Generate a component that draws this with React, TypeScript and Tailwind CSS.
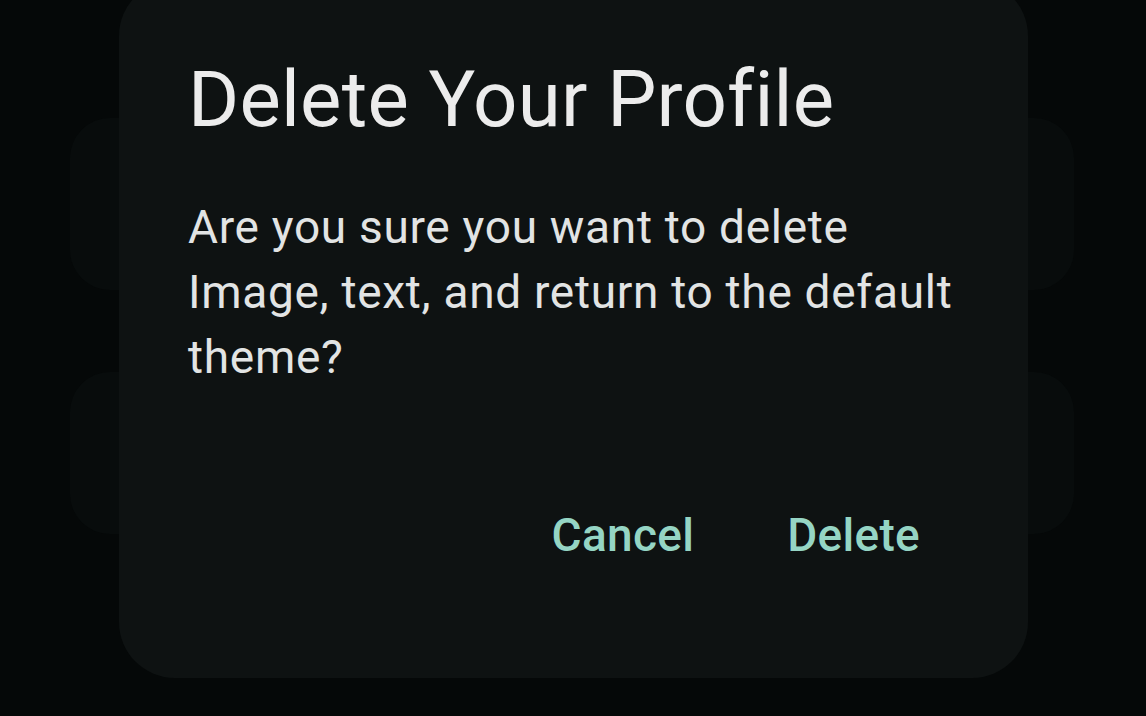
export default function App() {
  return (
    <div className="relative h-[716px] w-[1146px] overflow-hidden bg-[#050808] font-['Roboto',sans-serif]">
      {/* faint cards behind the dialog */}
      <div className="absolute left-[70px] top-[118px] h-[172px] w-[1004px] rounded-[40px] bg-[#080c0c]" />
      <div className="absolute left-[70px] top-[372px] h-[162px] w-[1004px] rounded-[40px] bg-[#080c0c]" />

      <div className="absolute left-[119px] top-[-20px] flex h-[698px] w-[909px] flex-col rounded-[56px] bg-[#0e1212] pl-[69px] pr-[60px] pt-[75px]">
        <h1 className="text-[78px] font-normal leading-[90px] tracking-[0.2px] text-[#ececec]">
          Delete Your Profile
        </h1>
        <p className="mt-[50px] text-[46px] leading-[65px] tracking-[0.7px] text-[#e2e4e4]">
          Are you sure you want to delete
          <br />
          Image, text, and return to the default
          <br />
          theme?
        </p>
        <div className="mt-[117px] flex justify-end gap-[93px] pr-[48px]">
          <button className="text-[46px] font-medium leading-[56px] tracking-[0.3px] text-[#95d5c4]">Cancel</button>
          <button className="text-[46px] font-medium leading-[56px] tracking-[0.3px] text-[#95d5c4]">Delete</button>
        </div>
      </div>
    </div>
  );
}
